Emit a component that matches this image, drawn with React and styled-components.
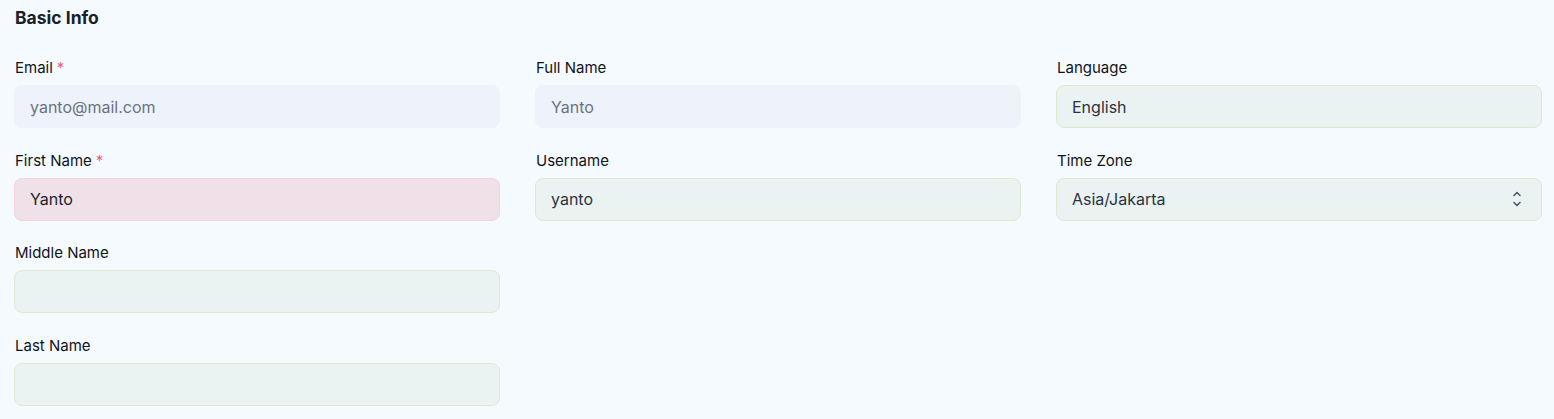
import React from 'react';
import styled, { createGlobalStyle, css } from 'styled-components';

const GlobalStyle = createGlobalStyle`
  body {
    margin: 0;
    background: #f5faff;
    font-family: Inter, "Noto Sans", sans-serif;
    color: #111827;
  }
`;

const Page = styled.div`
  padding: 6px 13px 0 14px;
`;

const Title = styled.h2`
  margin: 0 0 27px 1px;
  font-size: 17.5px;
  line-height: 24px;
  font-weight: 700;
  color: #1a1f2b;
`;

const Grid = styled.div`
  display: grid;
  grid-template-columns: repeat(3, 486px);
  column-gap: 35px;
  row-gap: 21.5px;
  align-items: start;
`;

const Field = styled.div`
  display: flex;
  flex-direction: column;
  gap: 7px;
  grid-column: ${({ $col }) => $col};
  grid-row: ${({ $row }) => $row};
`;

const Label = styled.label`
  padding-left: 1px;
  font-size: 15px;
  line-height: 21px;
  color: #111318;
`;

const Required = styled.span`
  margin-left: 4px;
  color: #f0607a;
`;

const Box = styled.div`
  position: relative;
  display: flex;
  align-items: center;
  height: 43px;
  box-sizing: border-box;
  padding: 0 15px;
  border-radius: 8px;
  border: 1px solid #dcebd0;
  background: #eaf2f2;
  font-size: 16px;
  color: #2b3340;

  ${({ $variant }) => $variant === 'disabled' && css`
    border-color: #eef2fa;
    background: #eef2fa;
    color: #6b7280;
  `}

  ${({ $variant }) => $variant === 'error' && css`
    border-color: #f8d0de;
    background: #f0e1e8;
    color: #1a1f2b;
  `}
`;

const SelectIcon = styled.svg`
  position: absolute;
  right: 20px;
  top: 50%;
  transform: translateY(-50%);
  width: 8px;
  height: 16px;
`;

function Chevrons() {
  return (
    <SelectIcon viewBox="0 0 8 16" fill="none" stroke="#4b5563" strokeWidth="1.5" strokeLinecap="round" strokeLinejoin="round">
      <path d="M1 4.5 L4 1.5 L7 4.5" />
      <path d="M1 11.5 L4 14.5 L7 11.5" />
    </SelectIcon>
  );
}

const fields = [
  { label: 'Email', required: true, value: 'yanto@mail.com', variant: 'disabled', col: 1, row: 1 },
  { label: 'First Name', required: true, value: 'Yanto', variant: 'error', col: 1, row: 2 },
  { label: 'Middle Name', value: '', col: 1, row: 3 },
  { label: 'Last Name', value: '', col: 1, row: 4 },
  { label: 'Full Name', value: 'Yanto', variant: 'disabled', col: 2, row: 1 },
  { label: 'Username', value: 'yanto', col: 2, row: 2 },
  { label: 'Language', value: 'English', col: 3, row: 1 },
  { label: 'Time Zone', value: 'Asia/Jakarta', select: true, col: 3, row: 2 },
];

export default function App() {
  return (
    <Page>
      <GlobalStyle />
      <Title>Basic Info</Title>
      <Grid>
        {fields.map((f) => (
          <Field key={f.label} $col={f.col} $row={f.row}>
            <Label>
              {f.label}
              {f.required && <Required>*</Required>}
            </Label>
            <Box $variant={f.variant}>
              {f.value}
              {f.select && <Chevrons />}
            </Box>
          </Field>
        ))}
      </Grid>
    </Page>
  );
}
